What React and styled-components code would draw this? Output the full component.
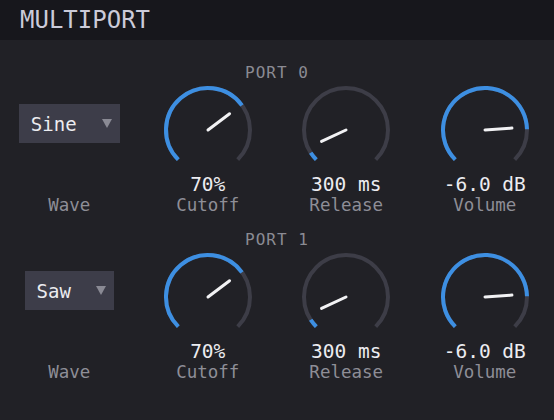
import styled, { createGlobalStyle } from "styled-components";

const GlobalStyle = createGlobalStyle`
  html, body {
    margin: 0;
    padding: 0;
    background: #212126;
  }
  body {
    font-family: "DejaVu Sans Mono", "Liberation Mono", monospace;
  }
`;

const BLUE = "#3d8fe2";
const TRACK = "#3d3d47";

// amount fills the arc, needle is where the pointer is drawn (degrees from top)
const knobs = [
  { label: "Cutoff", value: "70%", amount: 0.7, needle: 53 },
  { label: "Release", value: "300 ms", amount: 0.045, needle: -115 },
  { label: "Volume", value: "-6.0 dB", amount: 0.83, needle: 86 },
];

const ports = [
  { name: "PORT 0", wave: "Sine", knobs },
  { name: "PORT 1", wave: "Saw", knobs },
];

const point = (cx, cy, r, deg) => {
  const a = (deg * Math.PI) / 180;
  return [cx + r * Math.sin(a), cy - r * Math.cos(a)];
};

const arc = (cx, cy, r, from, to) => {
  const [x1, y1] = point(cx, cy, r, from);
  const [x2, y2] = point(cx, cy, r, to);
  const large = to - from > 180 ? 1 : 0;
  return `M ${x1} ${y1} A ${r} ${r} 0 ${large} 1 ${x2} ${y2}`;
};

const Knob = ({ amount, needle }) => {
  const start = -135;
  const end = 135;
  const at = start + amount * 270;
  const [px, py] = point(46, 46, 27, needle);
  return (
    <svg width="92" height="92" viewBox="0 0 92 92">
      <path d={arc(46, 46, 42, start, end)} fill="none" stroke={TRACK} strokeWidth="4" />
      <path d={arc(46, 46, 42, start, at)} fill="none" stroke={BLUE} strokeWidth="4" />
      <line x1="46" y1="46" x2={px} y2={py} stroke="#f2f2f4" strokeWidth="3" strokeLinecap="round" />
    </svg>
  );
};

const App = () => {
  return (
    <Panel>
      <GlobalStyle />
      <Header>
        <Title>MULTIPORT</Title>
      </Header>
      {ports.map((p) => (
        <Port key={p.name}>
          <PortLabel>{p.name}</PortLabel>
          <Controls>
            <Cell>
              <ControlArea $lift={13}>
                <Select>
                  <span>{p.wave}</span>
                  <Arrow />
                </Select>
              </ControlArea>
              <Value />
              <Label>Wave</Label>
            </Cell>
            {p.knobs.map((k) => (
              <Cell key={k.label}>
                <ControlArea>
                  <Knob amount={k.amount} needle={k.needle} />
                </ControlArea>
                <Value>{k.value}</Value>
                <Label>{k.label}</Label>
              </Cell>
            ))}
          </Controls>
        </Port>
      ))}
    </Panel>
  );
};

export default App;

const Panel = styled.div`
  width: 554px;
  height: 420px;
  background: #212126;
  overflow: hidden;
`;

const Header = styled.header`
  height: 40px;
  background: #17171c;
  display: flex;
  align-items: center;
  padding-left: 20px;
  box-sizing: border-box;
`;

const Title = styled.h1`
  margin: 0;
  font-size: 24px;
  font-weight: 400;
  line-height: 1;
  color: #cbcbd9;
`;

const Port = styled.section`
  display: flex;
  flex-direction: column;
  padding-top: 23px;
  & + & {
    padding-top: 15px;
  }
`;

const PortLabel = styled.div`
  text-align: center;
  font-size: 16px;
  line-height: 20px;
  letter-spacing: 1px;
  color: #8b8b93;
`;

const Controls = styled.div`
  display: grid;
  grid-template-columns: repeat(4, 1fr);
  margin-top: 1px;
`;

const Cell = styled.div`
  display: flex;
  flex-direction: column;
  align-items: center;
`;

const ControlArea = styled.div`
  height: 92px;
  display: flex;
  align-items: center;
  justify-content: center;
  box-sizing: border-box;
  padding-bottom: ${(p) => p.$lift || 0}px;
`;

const Select = styled.div`
  height: 39px;
  display: flex;
  align-items: center;
  gap: 25px;
  padding: 0 8px 0 12px;
  background: #3d3d49;
  color: #ececf0;
  font-size: 19px;
`;

const Arrow = styled.i`
  width: 0;
  height: 0;
  border-left: 5px solid transparent;
  border-right: 5px solid transparent;
  border-top: 9px solid #8a8a94;
`;

const Value = styled.div`
  height: 22px;
  margin-top: -2px;
  font-size: 19.5px;
  line-height: 22px;
  color: #ececf0;
`;

const Label = styled.div`
  margin-top: -1px;
  font-size: 17.5px;
  line-height: 20px;
  color: #8e8e97;
`;
